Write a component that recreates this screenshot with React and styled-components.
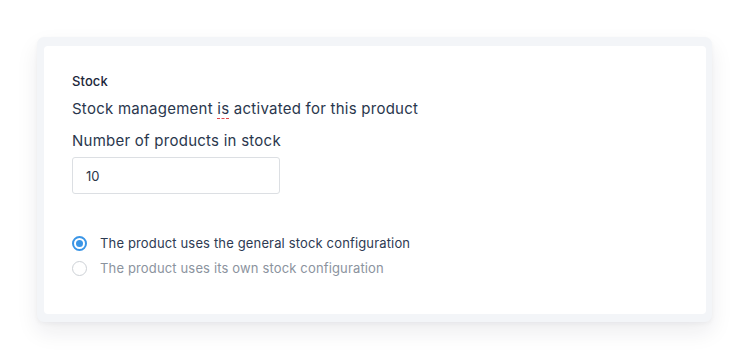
import React from "react";
import styled, { createGlobalStyle } from "styled-components";

const Global = createGlobalStyle`
  html, body { margin: 0; padding: 0; background: #ffffff; }
  body { font-family: "Inter", "Liberation Sans", sans-serif; -webkit-font-smoothing: antialiased; }
`;

const Page = styled.div`
  width: 750px;
  height: 360px;
  box-sizing: border-box;
  padding: 37px 38px 38px 37px;
`;

const Frame = styled.div`
  box-sizing: border-box;
  width: 675px;
  height: 285px;
  background: #f3f5f8;
  border-radius: 7px;
  padding: 9px 6px 8px 7px;
  box-shadow: 0 10px 22px rgba(20, 30, 50, 0.08), 0 2px 4px rgba(20, 30, 50, 0.04);
  display: flex;
`;

const Card = styled.div`
  flex: 1;
  background: #ffffff;
  border-radius: 4px;
  padding: 27px 28px;
  display: flex;
  flex-direction: column;
  align-items: flex-start;
  color: #25324a;
  & > * { flex-shrink: 0; }
`;

const Title = styled.div`
  font-size: 13px;
  font-weight: 500;
  line-height: 16px;
  color: #1c263a;
  letter-spacing: 0.1px;
`;

const Line = styled.div`
  font-size: 15px;
  line-height: 20px;
  letter-spacing: 0.25px;
  margin-top: ${(p) => p.$mt || 0}px;
  color: #2a374d;
`;

const Spell = styled.span`
  text-decoration: underline dashed #e0474c;
  text-underline-offset: 4px;
  text-decoration-thickness: 1px;
`;

const Input = styled.div`
  box-sizing: border-box;
  width: 208px;
  height: 37px;
  margin-top: 6px;
  border: 1px solid #dcdfe3;
  border-radius: 3px;
  padding: 0 13px;
  display: flex;
  align-items: center;
  font-size: 13px;
  color: #2b3547;
`;

const Radios = styled.div`
  margin-top: 41px;
  display: flex;
  flex-direction: column;
  gap: 9px;
`;

const RadioRow = styled.div`
  display: flex;
  align-items: center;
  gap: 13px;
  height: 16px;
  font-size: 13px;
  letter-spacing: 0.15px;
  color: ${(p) => (p.$active ? "#2d3a52" : "#8b939e")};
`;

const Dot = styled.span`
  box-sizing: border-box;
  width: 15px;
  height: 15px;
  border-radius: 50%;
  border: ${(p) => (p.$on ? "2px solid #3a95e6" : "1.5px solid #cdd1d6")};
  display: flex;
  align-items: center;
  justify-content: center;
  &::after {
    content: "";
    width: 7px;
    height: 7px;
    border-radius: 50%;
    background: ${(p) => (p.$on ? "#3a95e6" : "transparent")};
  }
`;

export default function App() {
  return (
    <>
      <Global />
      <Page>
        <Frame>
          <Card>
            <Title>Stock</Title>
            <Line $mt={10}>
              Stock management <Spell>is</Spell> activated for this product
            </Line>
            <Line $mt={12}>Number of products in stock</Line>
            <Input>10</Input>
            <Radios>
              <RadioRow $active>
                <Dot $on />
                The product uses the general stock configuration
              </RadioRow>
              <RadioRow>
                <Dot />
                The product uses its own stock configuration
              </RadioRow>
            </Radios>
          </Card>
        </Frame>
      </Page>
    </>
  );
}
